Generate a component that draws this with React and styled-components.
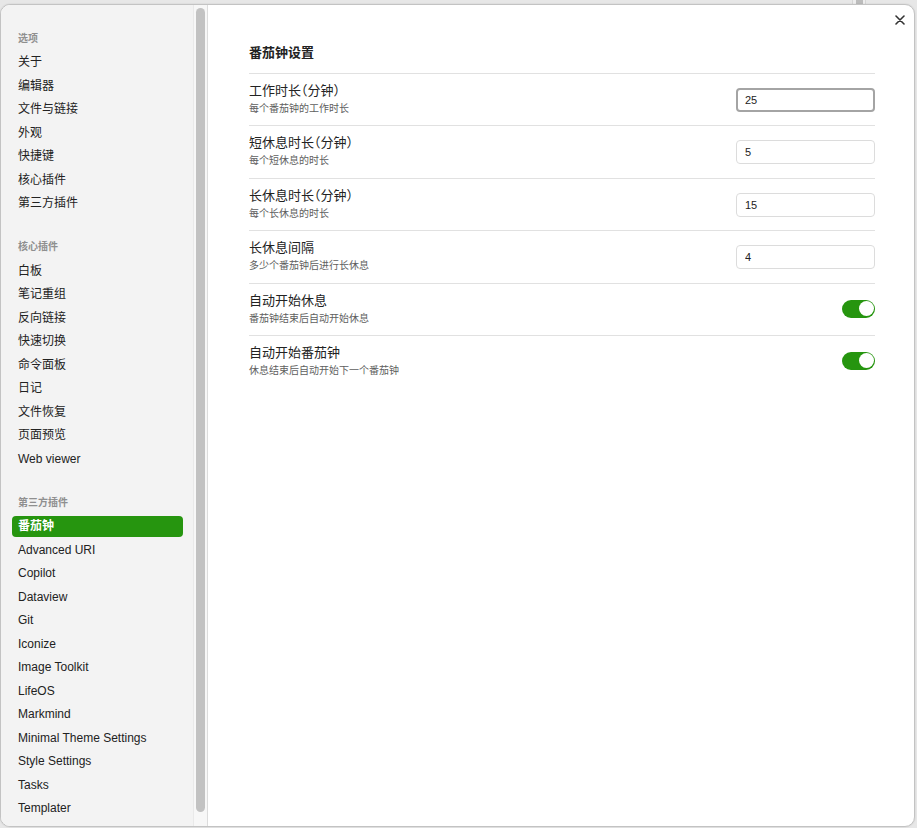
import React from "react";
import styled, { createGlobalStyle } from "styled-components";

const Global = createGlobalStyle`
  html, body { margin: 0; padding: 0; }
  body {
    background: #e7e7e7;
    font-family: "Liberation Sans", "Noto Sans CJK SC", sans-serif;
    color: #222;
  }
  * { box-sizing: border-box; }
`;

const Page = styled.div`
  position: relative;
  width: 917px;
  height: 828px;
  padding-top: 4px;
  overflow: hidden;
`;

const BackTrack = styled.div`
  position: absolute;
  left: 852px;
  top: 0;
  width: 14px;
  height: 5px;
  background: #ededed;
  border-left: 1px solid #d6d6d6;
  border-right: 1px solid #d6d6d6;
  display: flex;
  justify-content: center;
`;

const BackThumb = styled.div`
  width: 7px;
  height: 5px;
  background: #bcbcbc;
`;

const Modal = styled.div`
  position: relative;
  width: 915px;
  height: 823px;
  background: #fff;
  border: 1px solid #c3c3c3;
  border-radius: 10px;
  overflow: hidden;
  display: flex;
  box-shadow: 0 0 2px rgba(0, 0, 0, 0.12);
`;

const Sidebar = styled.nav`
  width: 193px;
  flex: none;
  background: #f3f3f3;
  border-right: 1px solid #e9e9e9;
  padding: 22.5px 10px 0 11px;
  display: flex;
  flex-direction: column;
  gap: 22px;
  overflow: hidden;
`;

const Group = styled.div`
  display: flex;
  flex-direction: column;
  gap: 2.5px;
`;

const GroupTitle = styled.div`
  padding: 3px 6px;
  margin-bottom: 1px;
  font-size: 10px;
  line-height: 15px;
  font-weight: 600;
  color: #8f8f8f;
`;

const NavItem = styled.div`
  padding: 3px 6px;
  font-size: 12px;
  line-height: 15px;
  border-radius: 4px;
  white-space: nowrap;
  color: ${(p) => (p.$active ? "#fff" : "#222")};
  background: ${(p) => (p.$active ? "#26950f" : "transparent")};
  font-weight: ${(p) => (p.$active ? 600 : 400)};
`;

const ScrollTrack = styled.div`
  width: 14px;
  flex: none;
  background: #f7f7f7;
  border-right: 1px solid #dcdcdc;
  padding: 3px 2px 14px 2px;
  display: flex;
`;

const ScrollThumb = styled.div`
  flex: 1;
  border-radius: 5px;
  background: #c2c2c2;
`;

const Content = styled.main`
  flex: 1;
  padding: 39px 39px 0 41px;
`;

const Title = styled.h2`
  margin: 0 0 11px;
  font-size: 13px;
  line-height: 18px;
  font-weight: 700;
  color: #222;
`;

const Row = styled.div`
  display: flex;
  align-items: center;
  justify-content: space-between;
  border-top: 1px solid #e1e1e1;
  padding: 8px 0 9.4px;
`;

const Info = styled.div`
  display: flex;
  flex-direction: column;
  gap: 3px;
`;

const Name = styled.div`
  font-size: 13px;
  line-height: 17px;
  color: #222;
  font-feature-settings: "halt";
`;

const Desc = styled.div`
  font-size: 10px;
  line-height: 14px;
  color: #5e5e5e;
`;

const NumInput = styled.input`
  width: 139px;
  height: 24px;
  margin-top: 2px;
  border-radius: 4px;
  border: ${(p) => (p.$focused ? "2px solid #a4a4a4" : "1px solid #dcdcdc")};
  padding: 0 ${(p) => (p.$focused ? "7px" : "8px")};
  font-family: "Liberation Sans", sans-serif;
  font-size: 11px;
  color: #222;
  background: #fff;
  outline: none;
`;

const Toggle = styled.div`
  width: 33px;
  height: 18px;
  border-radius: 9px;
  background: #26950f;
  padding: 1.5px;
  display: flex;
  justify-content: flex-end;
`;

const Knob = styled.div`
  width: 15px;
  height: 15px;
  border-radius: 50%;
  background: #fff;
`;

const CloseBtn = styled.button`
  position: absolute;
  top: 6px;
  right: 5px;
  width: 18px;
  height: 18px;
  border: none;
  background: transparent;
  padding: 0;
  display: flex;
  align-items: center;
  justify-content: center;
  cursor: pointer;
`;

const groups = [
  {
    title: "选项",
    items: ["关于", "编辑器", "文件与链接", "外观", "快捷键", "核心插件", "第三方插件"],
  },
  {
    title: "核心插件",
    items: ["白板", "笔记重组", "反向链接", "快速切换", "命令面板", "日记", "文件恢复", "页面预览", "Web viewer"],
  },
  {
    title: "第三方插件",
    items: [
      "番茄钟",
      "Advanced URI",
      "Copilot",
      "Dataview",
      "Git",
      "Iconize",
      "Image Toolkit",
      "LifeOS",
      "Markmind",
      "Minimal Theme Settings",
      "Style Settings",
      "Tasks",
      "Templater",
    ],
  },
];

const settings = [
  { name: "工作时长（分钟）", desc: "每个番茄钟的工作时长", value: "25", focused: true },
  { name: "短休息时长（分钟）", desc: "每个短休息的时长", value: "5" },
  { name: "长休息时长（分钟）", desc: "每个长休息的时长", value: "15" },
  { name: "长休息间隔", desc: "多少个番茄钟后进行长休息", value: "4" },
  { name: "自动开始休息", desc: "番茄钟结束后自动开始休息", toggle: true },
  { name: "自动开始番茄钟", desc: "休息结束后自动开始下一个番茄钟", toggle: true },
];

export default function App() {
  return (
    <Page>
      <Global />
      <BackTrack>
        <BackThumb />
      </BackTrack>
      <Modal>
        <Sidebar>
          {groups.map((g) => (
            <Group key={g.title}>
              <GroupTitle>{g.title}</GroupTitle>
              {g.items.map((it) => (
                <NavItem key={it} $active={it === "番茄钟"}>
                  {it}
                </NavItem>
              ))}
            </Group>
          ))}
        </Sidebar>
        <ScrollTrack>
          <ScrollThumb />
        </ScrollTrack>
        <Content>
          <Title>番茄钟设置</Title>
          {settings.map((s) => (
            <Row key={s.name}>
              <Info>
                <Name>{s.name}</Name>
                <Desc>{s.desc}</Desc>
              </Info>
              {s.toggle ? (
                <Toggle>
                  <Knob />
                </Toggle>
              ) : (
                <NumInput type="text" readOnly value={s.value} $focused={s.focused} />
              )}
            </Row>
          ))}
        </Content>
        <CloseBtn aria-label="关闭">
          <svg width="10" height="10" viewBox="0 0 10 10">
            <path d="M1 1L9 9M9 1L1 9" stroke="#333" strokeWidth="1.6" strokeLinecap="round" />
          </svg>
        </CloseBtn>
      </Modal>
    </Page>
  );
}
